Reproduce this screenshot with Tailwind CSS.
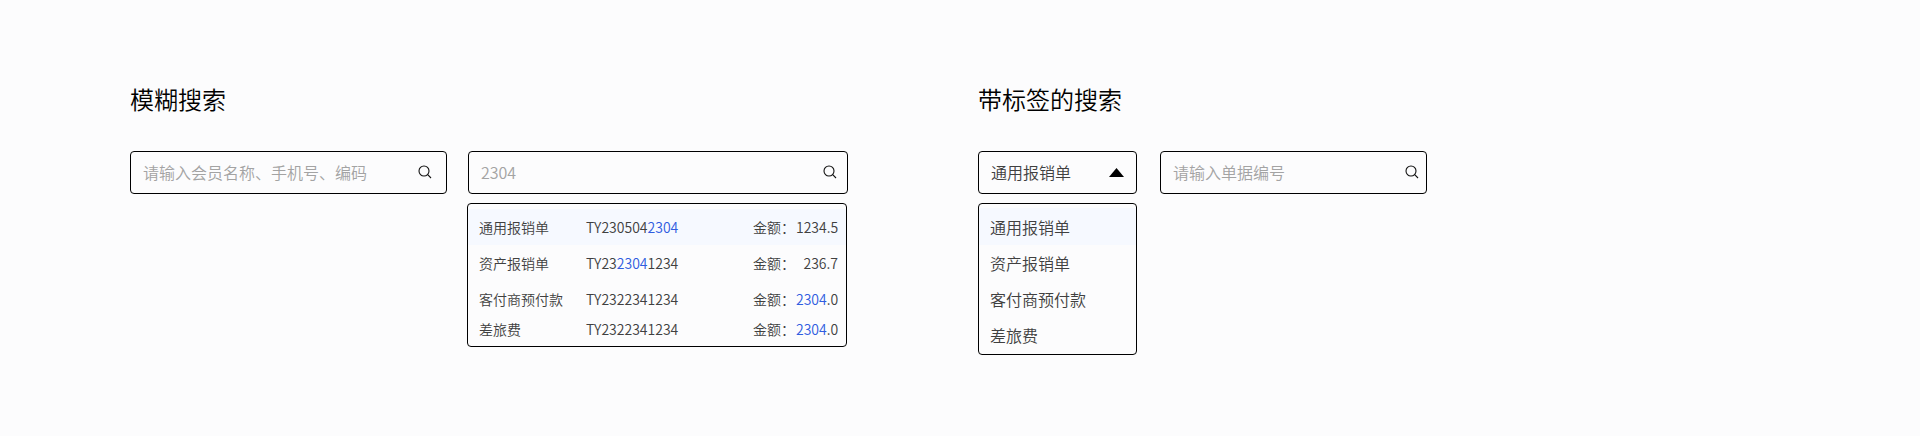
<!DOCTYPE html>
<html lang="zh-CN">
<head>
    <meta charset="UTF-8">
    <title>搜索</title>
    <script src="https://cdn.jsdelivr.net/npm/@tailwindcss/browser@4"></script>
</head>
<body class="bg-[#fcfcfd] h-[436px] overflow-hidden font-[350] font-['Noto_Sans_CJK_SC',sans-serif] text-[#404040]">
    <div class="flex pl-[130px] pt-[81px]">

        <!-- fuzzy search -->
        <section class="w-[848px]">
            <h2 class="text-[24px] leading-[36px] text-black mb-[34px]">模糊搜索</h2>
            <div class="flex gap-[21px] items-start">
                <div class="w-[317px] h-[43px] pl-[12px] pr-[13px] pb-[2px] flex items-center justify-between border border-black rounded-[4px]">
                    <span class="text-[16px] text-[#a3a3a3]">请输入会员名称、手机号、编码</span>
                    <svg class="w-[16px] h-[16px]" viewBox="0 0 16 16" fill="none" stroke="#111" stroke-width="1.1"><circle cx="7" cy="7" r="5"/><path d="M10.7 10.7 14 14"/></svg>
                </div>
                <div class="w-[380px]">
                    <div class="h-[43px] pl-[12px] pr-[9px] pb-[2px] flex items-center justify-between border border-black rounded-[4px]">
                        <span class="text-[16px] text-[#a3a3a3]">2304</span>
                        <svg class="w-[16px] h-[16px]" viewBox="0 0 16 16" fill="none" stroke="#111" stroke-width="1.1"><circle cx="7" cy="7" r="5"/><path d="M10.7 10.7 14 14"/></svg>
                    </div>
                    <div class="-ml-px mr-px mt-[9px] h-[144px] pt-[5px] border border-black rounded-[4px] text-[14px]">
                        <div class="h-[36px] pl-[11px] pr-[8px] flex items-center bg-[#f6f9ff]">
                            <span class="w-[107px]">通用报销单</span>
                            <span>TY230504<span class="text-[#2f5ce0]">2304</span></span>
                            <span class="ml-auto -translate-x-px">金额：</span>
                            <span class="w-[42px] text-right">1234.5</span>
                        </div>
                        <div class="h-[36px] pl-[11px] pr-[8px] flex items-center">
                            <span class="w-[107px]">资产报销单</span>
                            <span>TY23<span class="text-[#2f5ce0]">2304</span>1234</span>
                            <span class="ml-auto -translate-x-px">金额：</span>
                            <span class="w-[42px] text-right">236.7</span>
                        </div>
                        <div class="h-[35px] pt-[1px] pl-[11px] pr-[8px] flex items-center">
                            <span class="w-[107px]">客付商预付款</span>
                            <span>TY2322341234</span>
                            <span class="ml-auto -translate-x-px">金额：</span>
                            <span class="w-[42px] text-right"><span class="text-[#2f5ce0]">2304</span>.0</span>
                        </div>
                        <div class="h-[26px] pt-[1px] pl-[11px] pr-[8px] flex items-center">
                            <span class="w-[107px]">差旅费</span>
                            <span>TY2322341234</span>
                            <span class="ml-auto -translate-x-px">金额：</span>
                            <span class="w-[42px] text-right"><span class="text-[#2f5ce0]">2304</span>.0</span>
                        </div>
                    </div>
                </div>
            </div>
        </section>

        <!-- search with tag -->
        <section>
            <h2 class="text-[24px] leading-[36px] text-black mb-[34px]">带标签的搜索</h2>
            <div class="flex gap-[23px] items-start">
                <div class="w-[159px]">
                    <div class="h-[43px] px-[12px] pb-[2px] flex items-center justify-between border border-black rounded-[4px]">
                        <span class="text-[16px]">通用报销单</span>
                        <svg class="w-[15px] h-[10px] mt-[2px]" viewBox="0 0 15 10" fill="#000"><path d="M7.5 0 15 9H0Z"/></svg>
                    </div>
                    <div class="mt-[9px] h-[152px] pt-[4px] border border-black rounded-[4px] text-[16px]">
                        <div class="h-[37px] pl-[11px] flex items-center bg-[#f6f9ff]">通用报销单</div>
                        <div class="h-[36px] pl-[11px] flex items-center">资产报销单</div>
                        <div class="h-[36px] pl-[11px] flex items-center">客付商预付款</div>
                        <div class="h-[36px] pl-[11px] flex items-center">差旅费</div>
                    </div>
                </div>
                <div class="w-[267px] h-[43px] pl-[12px] pr-[6px] pb-[2px] flex items-center justify-between border border-black rounded-[4px]">
                    <span class="text-[16px] text-[#a3a3a3]">请输入单据编号</span>
                    <svg class="w-[16px] h-[16px]" viewBox="0 0 16 16" fill="none" stroke="#111" stroke-width="1.1"><circle cx="7" cy="7" r="5"/><path d="M10.7 10.7 14 14"/></svg>
                </div>
            </div>
        </section>
    </div>
</body>
</html>
